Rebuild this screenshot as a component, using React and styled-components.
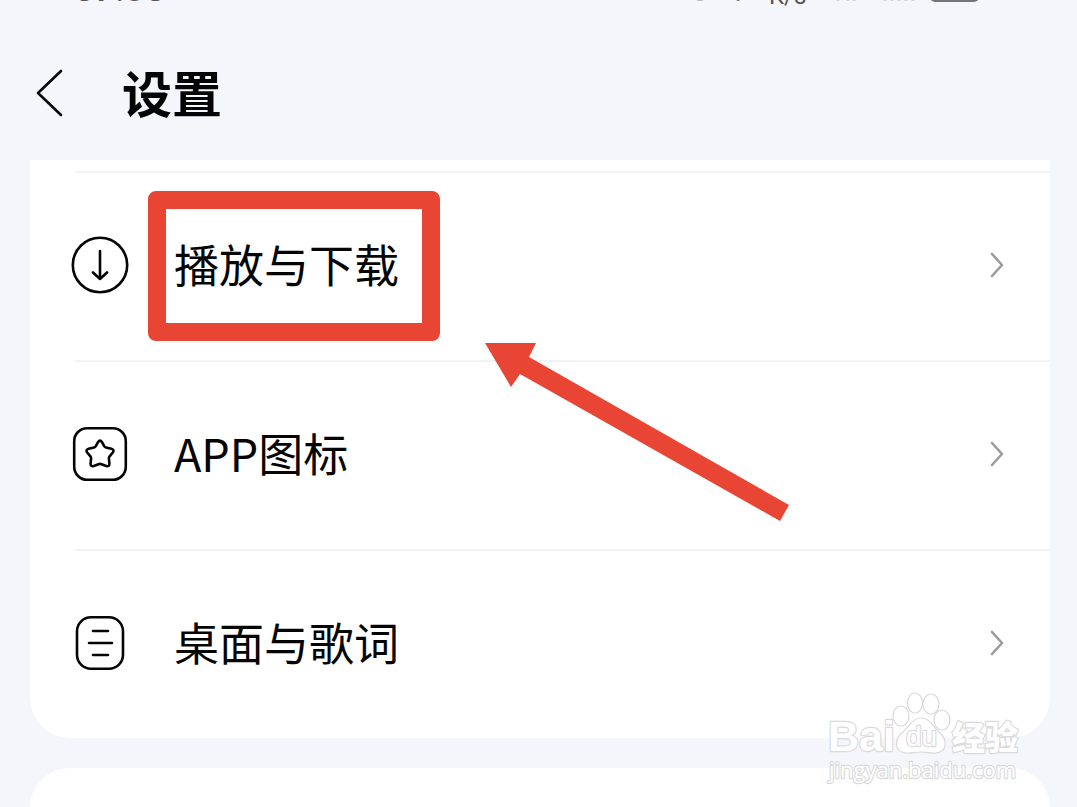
import styled, { createGlobalStyle } from "styled-components";

const ROWS = [
    { id: "play", label: "播放与下载", icon: DownloadIcon, marked: true },
    { id: "appIcon", label: "APP图标", icon: StarIcon },
    { id: "desktop", label: "桌面与歌词", icon: LyricsIcon }
];

export default function App() {
    return (
        <Page>
            <GlobalStyle />
            <StatusBar>
                <Clock>07:38</Clock>
                <StatusIcons />
            </StatusBar>
            <Header>
                <BackButton type="button" aria-label="返回">
                    <svg width="30" height="50" viewBox="0 0 30 50" fill="none">
                        <path d="M27 3 L4 25 L27 47" stroke="#06070b" strokeWidth="2.6" strokeLinecap="round" strokeLinejoin="round" />
                    </svg>
                </BackButton>
                <Title>设置</Title>
            </Header>
            <Card>
                {ROWS.map(({ id, label, icon: Icon, marked }) => (
                    <Item key={id}>
                        <RowButton type="button">
                            <Icon />
                            <Label>
                                {label}
                                {marked && <Marker />}
                                {marked && <Pointer />}
                            </Label>
                            <Chevron />
                        </RowButton>
                    </Item>
                ))}
            </Card>
            <NextCard />
            <Watermark />
        </Page>
    );
}

function StatusIcons() {
    return (
        <StatusGroup>
            <svg width="76" height="28" viewBox="0 0 76 28" fill="none">
                <circle cx="7" cy="15" r="7" stroke="#b4b5ba" strokeWidth="2" />
                <path d="M37 12 L45 21" stroke="#66676b" strokeWidth="4" strokeLinecap="round" />
            </svg>
            <Speed>K/s</Speed>
            <svg width="150" height="28" viewBox="0 0 150 28" fill="none">
                <path d="M7 16 v7 M17 14 v9 M23 14 v9" stroke="#d2d3d8" strokeWidth="3" />
                <path d="M54 14 v9 M61 12 v11 M68 10 v13 M75 8 v15 M82 6 v17" stroke="#d2d3d8" strokeWidth="3" />
                <rect x="99" y="0" width="49" height="24" rx="5" fill="#737479" />
            </svg>
        </StatusGroup>
    );
}

function DownloadIcon() {
    return (
        <RowIcon viewBox="0 0 58 58">
            <circle cx="29" cy="29" r="27.2" />
            <path d="M29 15 V43 M22 36.5 L29 43 L36 36.5" />
        </RowIcon>
    );
}

function StarIcon() {
    return (
        <RowIcon viewBox="0 0 58 58">
            <rect x="3.2" y="3.2" width="51.6" height="51.6" rx="13" />
            <path d="M27 17.2 Q29 14 31 17.2 L33.2 21.2 Q33.8 22.2 35 22.5 L40.4 23.8 Q43.8 24.8 41.8 27.5 L38.6 31.3 Q37.8 32.3 37.9 33.5 L38.4 38.4 Q38.4 42 35.2 41 L30.6 39.2 Q29 38.6 27.4 39.2 L22.8 41 Q19.6 42 19.6 38.4 L20.1 33.5 Q20.2 32.3 19.4 31.3 L16.2 27.5 Q14.2 24.8 17.6 23.8 L23 22.5 Q24.2 22.2 24.8 21.2 Z" />
        </RowIcon>
    );
}

function LyricsIcon() {
    return (
        <RowIcon viewBox="0 0 58 58">
            <rect x="6" y="3.2" width="46" height="51.6" rx="14" />
            <path d="M22 17 H37 M18 29 H41 M22 41 H37" />
        </RowIcon>
    );
}

function Chevron() {
    return (
        <svg width="18" height="30" viewBox="0 0 18 30" fill="none">
            <path d="M4 4 L14 15 L4 26" stroke="#9b9b9d" strokeWidth="2.6" strokeLinecap="round" strokeLinejoin="round" />
        </svg>
    );
}

function Pointer() {
    return (
        <Arrow viewBox="0 0 306 180" aria-hidden="true">
            <path d="M0 0 H51 L44 14 L304 162 L295 178 L35 31 L26 44 Z" fill="#e84535" />
        </Arrow>
    );
}

function Watermark() {
    return (
        <WatermarkBox viewBox="0 0 200 100" role="img" aria-label="Baidu 经验">
            <text className="latin" x="2" y="64">Bai</text>
            <ellipse cx="75" cy="29" rx="8" ry="10" />
            <ellipse cx="89" cy="16" rx="7.5" ry="10" />
            <ellipse cx="105" cy="17" rx="8" ry="10" />
            <ellipse cx="116" cy="33" rx="8" ry="10" />
            <path d="M95 31 C86 31 83 40 77 45 C69 51 68 62 76 65 C82 68 88 65 95 65 C102 65 108 68 114 65 C122 61 120 51 113 45 C107 40 104 31 95 31 Z" />
            <text className="du" x="80" y="59">du</text>
            <text className="cjk" x="126" y="63">经验</text>
            <text className="site" x="3" y="91">jingyan.baidu.com</text>
        </WatermarkBox>
    );
}

const GlobalStyle = createGlobalStyle`
    * {
        box-sizing: border-box;
    }

    body {
        margin: 0;
        background: #f5f6fb;
        font-family: "Noto Sans CJK SC", sans-serif;
        color: #050505;
    }

    button {
        padding: 0;
        border: 0;
        background: none;
        color: inherit;
        font: inherit;
        cursor: pointer;
    }

    svg {
        display: block;
        flex-shrink: 0;
    }
`;

const Page = styled.div`
    position: relative;
    display: flex;
    flex-direction: column;
    height: 100vh;
    overflow: hidden;
`;

/* scrolled mostly out of view, only the lower edge stays visible */
const StatusBar = styled.div`
    display: flex;
    flex-shrink: 0;
    align-items: flex-end;
    justify-content: space-between;
    height: 26px;
    padding: 0 96px 20px 74px;
    color: #55565a;
`;

const Clock = styled.span`
    font-family: Roboto, sans-serif;
    font-size: 36px;
    font-weight: 500;
    line-height: 34px;
`;

const StatusGroup = styled.div`
    display: flex;
    align-items: flex-end;
`;

const Speed = styled.span`
    width: 62px;
    font-family: Roboto, sans-serif;
    font-size: 24px;
    line-height: 20px;
`;

const Header = styled.header`
    display: flex;
    flex-shrink: 0;
    align-items: center;
    gap: 58px;
    height: 134px;
    padding-left: 34px;
`;

const BackButton = styled.button`
    display: flex;
`;

const Title = styled.h1`
    margin: 0;
    padding-bottom: 4px;
    font-size: 50px;
    font-weight: 700;
    line-height: 60px;
`;

const Card = styled.ul`
    flex-shrink: 0;
    margin: 0 27px 30px 30px;
    padding: 11px 0 0;
    border-radius: 0 0 40px 40px;
    background: #fff;
    list-style: none;
`;

const NextCard = styled.section`
    flex: 1 0 80px;
    margin: 0 27px 0 30px;
    border-radius: 40px 40px 0 0;
    background: #fff;
`;

const Item = styled.li`
    &::before {
        content: "";
        display: block;
        height: 2px;
        margin-left: 45px;
        background: #f3f3f5;
    }
`;

const RowButton = styled.button`
    display: flex;
    align-items: center;
    justify-content: space-between;
    gap: 45px;
    width: 100%;
    height: 187px;
    padding: 0 44px 3px 41px;
    text-align: left;
`;

const RowIcon = styled.svg`
    width: 58px;
    height: 58px;
    fill: none;
    stroke: #050505;
    stroke-width: 2.6;
    stroke-linecap: round;
    stroke-linejoin: round;
`;

const Label = styled.span`
    position: relative;
    margin-right: auto;
    padding-bottom: 2px;
    font-size: 45px;
    line-height: 60px;
    white-space: nowrap;
`;

const Marker = styled.span`
    position: absolute;
    inset: -43px -41px -45px -26px;
    border: 18px solid #e84535;
    border-radius: 8px;
`;

const Arrow = styled.svg`
    position: absolute;
    top: 109px;
    left: 311px;
    width: 306px;
    height: 180px;
    z-index: 1;
`;

const WatermarkBox = styled.svg`
    position: absolute;
    right: 51px;
    bottom: 20px;
    width: 200px;
    height: 100px;
    fill: #fff;
    stroke: #dadadd;
    stroke-width: 1.2;

    text {
        paint-order: stroke;
        stroke-width: 2.4;
        stroke-linejoin: round;
        font-family: "Liberation Sans", sans-serif;
    }

    .latin {
        font-size: 43px;
        font-weight: 700;
    }

    .du {
        font-size: 28px;
        font-weight: 400;
    }

    .cjk {
        font-family: "Noto Sans CJK SC", sans-serif;
        font-size: 33px;
        font-weight: 900;
    }

    .site {
        font-family: "Open Sans", sans-serif;
        font-size: 22px;
    }
`;
